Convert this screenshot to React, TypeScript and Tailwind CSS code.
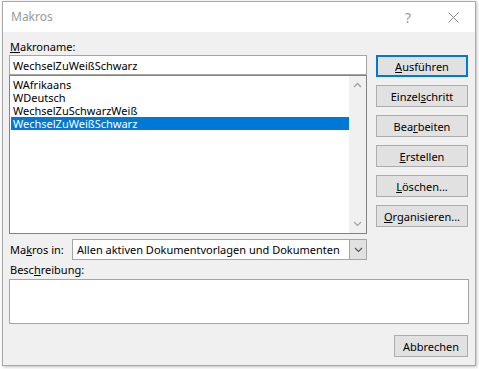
import React from 'react';

const macros = ['WAfrikaans', 'WDeutsch', 'WechselZuSchwarzWeiß', 'WechselZuWeißSchwarz'];

const Btn: React.FC<{ children: React.ReactNode; primary?: boolean; className?: string }> = ({ children, primary, className }) => (
  <div
    className={`h-[22px] flex items-center justify-center bg-[#e1e1e1] text-[11px] text-black whitespace-nowrap ${
      primary ? 'border-2 border-[#0078d7]' : 'border border-[#adadad]'
    } ${className ?? ''}`}
  >
    {children}
  </div>
);

const ChevronUp = () => (
  <svg width="9" height="6" viewBox="0 0 9 6" fill="none">
    <path d="M1 5 L4.5 1.5 L8 5" stroke="#a3a3a3" strokeWidth="1.4" />
  </svg>
);

const ChevronDown = ({ color = '#a3a3a3' }: { color?: string }) => (
  <svg width="9" height="6" viewBox="0 0 9 6" fill="none">
    <path d="M1 1 L4.5 4.5 L8 1" stroke={color} strokeWidth="1.2" />
  </svg>
);

export default function App() {
  return (
    <div
      className="w-[479px] h-[369px] bg-white pl-[2px] pt-[1px]"
      style={{ fontFamily: '"Noto Sans", "Open Sans", sans-serif' }}
    >
      <div className="w-[474px] h-[365px] border border-[#a8a8a8] shadow-[1px_1px_3px_rgba(0,0,0,0.25)] flex flex-col">
        {/* title bar */}
        <div className="h-[30px] bg-white flex items-center pl-[8px] pr-[16px]">
          <span className="text-[12px] text-[#999999] flex-1">Makros</span>
          <span className="text-[14px] text-[#999999] mr-[37px]">?</span>
          <svg width="11" height="11" viewBox="0 0 11 11">
            <path d="M0.5 0.5 L10.5 10.5 M10.5 0.5 L0.5 10.5" stroke="#8a8a8a" strokeWidth="1" />
          </svg>
        </div>

        {/* body */}
        <div className="flex-1 bg-[#f0f0f0] pl-[6px] pt-[7px] text-[11px] text-black leading-[15px] whitespace-nowrap">
          <div className="flex">
            <div className="w-[358px] flex flex-col">
              <div className="h-[16px] pl-[1px]">
                <span className="underline">M</span>akroname:
              </div>
              <div className="h-[20px] bg-white border border-[#a5a5a5] flex items-center pl-[3px]">
                WechselZuWeißSchwarz
              </div>
              <div className="h-[159px] bg-white border border-[#828282] flex">
                <div className="flex-1 pt-[2px] pl-[1px]">
                  {macros.map((m, i) => (
                    <div
                      key={m}
                      className={`h-[13px] leading-[13px] pl-[2px] ${i === 3 ? 'bg-[#0078d7] text-white' : ''}`}
                    >
                      {m}
                    </div>
                  ))}
                </div>
                <div className="w-[17px] bg-[#f0f0f0] flex flex-col items-center justify-between py-[6px]">
                  <ChevronUp />
                  <ChevronDown />
                </div>
              </div>
              <div className="mt-[5px] h-[21px] flex items-center">
                <div className="w-[63px] pl-[1px]">
                  Ma<span className="underline">k</span>ros in:
                </div>
                <div className="flex-1 h-[21px] bg-white border border-[#a5a5a5] flex items-center pl-[4px]">
                  <span className="flex-1">Allen aktiven Dokumentvorlagen und Dokumenten</span>
                  <div className="w-[17px] h-[19px] bg-[#e1e1e1] border-l border-[#a5a5a5] flex items-center justify-center">
                    <ChevronDown color="#555555" />
                  </div>
                </div>
              </div>
            </div>

            <div className="ml-[9px] w-[92px] pt-[16px] flex flex-col gap-[8px]">
              <Btn primary>
                <span>
                  <span className="underline">A</span>usführen
                </span>
              </Btn>
              <Btn>
                <span>
                  Einzel<span className="underline">s</span>chritt
                </span>
              </Btn>
              <Btn>
                <span>
                  Bea<span className="underline">r</span>beiten
                </span>
              </Btn>
              <Btn>
                <span>
                  <span className="underline">E</span>rstellen
                </span>
              </Btn>
              <Btn>
                <span>
                  <span className="underline">L</span>öschen...
                </span>
              </Btn>
              <Btn>
                <span>
                  <span className="underline">O</span>rganisieren...
                </span>
              </Btn>
            </div>
          </div>

          <div className="h-[19px] flex items-center pl-[1px]">
            <span>
              Besc<span className="underline">h</span>reibung:
            </span>
          </div>
          <div className="w-[460px] h-[45px] bg-white border border-[#a5a5a5]" />
          <div className="mt-[11px] w-[459px] flex justify-end">
            <Btn className="w-[74px]">Abbrechen</Btn>
          </div>
        </div>
      </div>
    </div>
  );
}
